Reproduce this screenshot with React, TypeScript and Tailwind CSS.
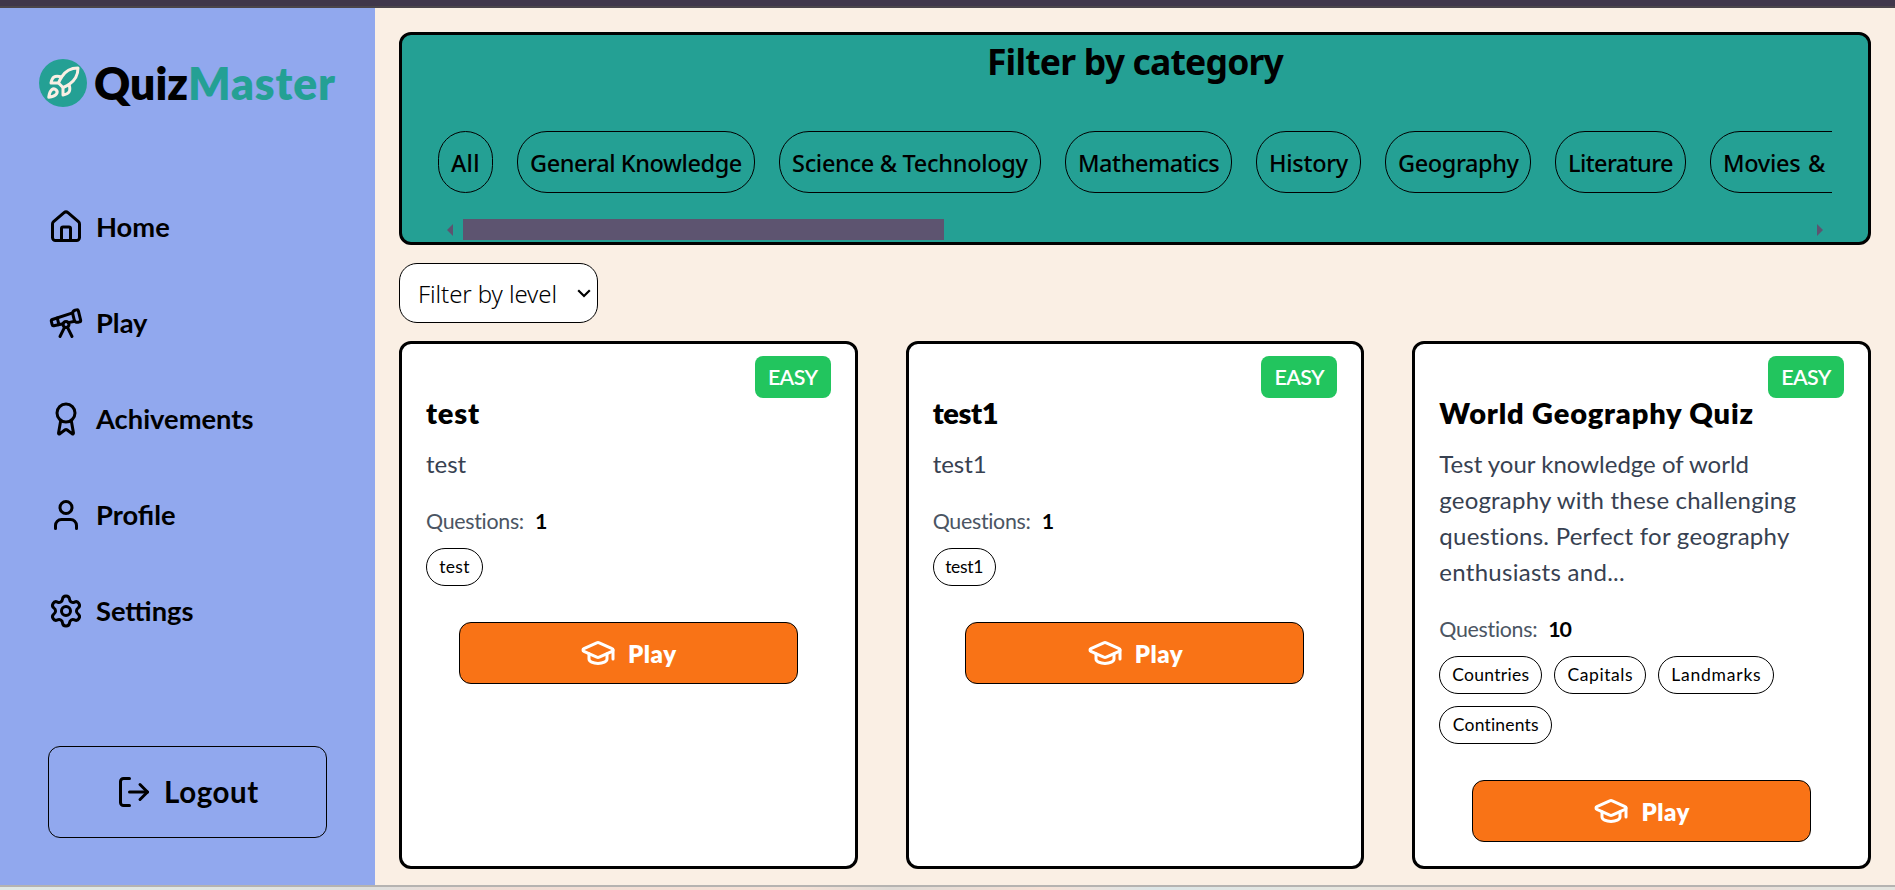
import type { ReactNode } from "react";
import { Award, GraduationCap, House, LogOut, Rocket, Settings, Telescope, User } from "lucide-react";

const navItems = [
  { label: "Home", icon: House },
  { label: "Play", icon: Telescope },
  { label: "Achivements", icon: Award },
  { label: "Profile", icon: User },
  { label: "Settings", icon: Settings },
];

const categories = [
  { label: "All", cls: "w-[55px] tracking-[0.2px]" },
  { label: "General Knowledge", cls: "w-[238px] tracking-[-0.42px]" },
  { label: "Science & Technology", cls: "w-[262px] tracking-[-0.3px]" },
  { label: "Mathematics", cls: "w-[167px] tracking-[-0.46px]" },
  { label: "History", cls: "w-[105px] tracking-[-0.3px]" },
  { label: "Geography", cls: "w-[146px] tracking-[-0.4px]" },
  { label: "Literature", cls: "w-[131px] tracking-[-0.6px]" },
  { label: "Movies & TV", cls: "w-[170px] tracking-[-0.3px] [word-spacing:2px]" },
];

type Tag = { label: string; cls: string };

type Quiz = {
  title: string;
  titleCls: string;
  description: ReactNode;
  questions: number;
  tags: Tag[];
};

const quizzes: Quiz[] = [
  {
    title: "test",
    titleCls: "tracking-[0.8px]",
    description: "test",
    questions: 1,
    tags: [{ label: "test", cls: "w-[57px] tracking-[0.35px]" }],
  },
  {
    title: "test1",
    titleCls: "tracking-[-0.4px]",
    description: "test1",
    questions: 1,
    tags: [{ label: "test1", cls: "w-[63px] tracking-[-0.3px]" }],
  },
  {
    title: "World Geography Quiz",
    titleCls: "tracking-[0.83px]",
    description: (
      <>
        <span className="block">Test your knowledge of world</span>
        <span className="block tracking-[0.2px]">geography with these challenging</span>
        <span className="block tracking-[0.26px]">questions. Perfect for geography</span>
        <span className="block tracking-[0.28px]">enthusiasts and...</span>
      </>
    ),
    questions: 10,
    tags: [
      { label: "Countries", cls: "w-[103px] tracking-[0.3px]" },
      { label: "Capitals", cls: "w-[92px] tracking-[0.6px]" },
      { label: "Landmarks", cls: "w-[116px] tracking-[0.8px]" },
      { label: "Continents", cls: "w-[113px] tracking-[0.2px]" },
    ],
  },
];

function Sidebar() {
  return (
    <aside className="flex w-[375px] shrink-0 flex-col bg-[#91a8ee] pt-[51px] pb-[47px]">
      <div className="flex h-12 items-center gap-[7px] pl-[39px]">
        <div className="flex size-12 items-center justify-center rounded-full bg-[#24a094]">
          <Rocket size={36} className="text-[#faefe4]" />
        </div>
        <div className="flex h-12 items-center pb-px text-[44.5px] leading-[47px] font-extrabold text-black">
          <span className="w-[94px]">Quiz</span>
          <span className="tracking-[0.8px] text-[#24a094]">Master</span>
        </div>
      </div>
      <nav className="mt-[102px] flex flex-col gap-[60px] pl-12">
        {navItems.map(({ label, icon: Icon }) => (
          <a key={label} className="flex h-9 items-center gap-3 text-[27.3px] leading-9 font-bold text-black">
            <Icon size={36} />
            {label}
          </a>
        ))}
      </nav>
      <button className="mx-12 mt-auto flex h-[92px] items-center justify-center gap-3 rounded-xl border border-black text-[29.5px] font-bold tracking-[0.6px] text-black">
        <LogOut size={36} />
        <span className="pt-px">Logout</span>
      </button>
    </aside>
  );
}

function CategoryFilter() {
  return (
    <section className="flex h-[213px] flex-col rounded-xl border-[3px] border-black bg-[#24a094] px-9 font-['Noto_Sans',sans-serif] text-black">
      <h2 className="h-[50px] pt-px text-center text-[35.5px] leading-[50px] font-bold tracking-[-0.8px]">
        Filter by category
      </h2>
      <div className="mt-[46px] flex gap-6 overflow-hidden">
        {categories.map((c) => (
          <button
            key={c.label}
            className={`h-[62px] shrink-0 rounded-[30px] border border-black pt-[3px] pl-3 text-left text-[23.5px] font-medium whitespace-nowrap ${c.cls}`}
          >
            {c.label}
          </button>
        ))}
      </div>
      <div className="mt-[26px] flex h-[21px] items-center pr-[9px] pl-[9px]">
        <svg width="6" height="12" viewBox="0 0 6 12" fill="#5d5470">
          <path d="M6 0v12L0 6z" />
        </svg>
        <div className="ml-[10px] h-full w-[481px] bg-[#5d5470]" />
        <svg className="ml-auto" width="6" height="12" viewBox="0 0 6 12" fill="#5d5470">
          <path d="M0 0v12l6-6z" />
        </svg>
      </div>
    </section>
  );
}

function LevelSelect() {
  return (
    <button className="mt-[18px] flex h-[60px] w-[199px] items-center justify-between rounded-[18px] border border-black bg-white pr-[6px] pl-[18px] font-['Noto_Sans',sans-serif] text-[24px] font-light tracking-[-0.09px] text-black">
      <span className="pt-[2px]">Filter by level</span>
      <svg width="14" height="9" viewBox="0 0 14 9" fill="none" stroke="black" strokeWidth="2.2">
        <path d="M1.2 1.2 7 7l5.8-5.8" />
      </svg>
    </button>
  );
}

function QuizCard({ quiz }: { quiz: Quiz }) {
  return (
    <article className="relative flex h-[528px] flex-col rounded-xl border-[3px] border-black bg-white px-6 pt-[51px]">
      <span className="absolute top-3 right-6 flex h-[42px] w-[76px] items-center justify-center rounded-lg bg-[#22c55e] pt-px text-[21.4px] font-semibold tracking-[-0.6px] text-white">
        EASY
      </span>
      <h3 className={`text-[29px] leading-9 font-extrabold text-black ${quiz.titleCls}`}>{quiz.title}</h3>
      <p className="mt-[15px] text-[24px] leading-9 text-[#374151]">{quiz.description}</p>
      <div className="mt-[22px] flex h-8 items-center pt-[2px] text-[21.4px] leading-8">
        <span className="w-[109px] tracking-[-0.3px] text-[#4b5563]">Questions:</span>
        <span className="font-bold tracking-[-1.2px] text-black">{quiz.questions}</span>
      </div>
      <div className="mt-3 flex flex-wrap gap-3">
        {quiz.tags.map((t) => (
          <span
            key={t.label}
            className={`flex h-[38px] items-center justify-center rounded-full border border-black text-[17.5px] text-black ${t.cls}`}
          >
            {t.label}
          </span>
        ))}
      </div>
      <button className="mt-9 flex h-[62px] w-[339px] items-center justify-center gap-3 self-center rounded-xl border border-black bg-[#f97316] text-[24px] font-extrabold tracking-[0.5px] text-white">
        <GraduationCap size={36} />
        <span className="pt-px">Play</span>
      </button>
    </article>
  );
}

export default function App() {
  return (
    <div className="flex h-[890px] w-[1895px] flex-col overflow-hidden bg-[#faefe4] font-[Lato,sans-serif]">
      <div className="h-2 shrink-0 border-b-2 border-[#4b454b] bg-[#40374b]" />
      <div className="flex h-[877px] shrink-0">
        <Sidebar />
        <main className="flex min-w-0 flex-1 flex-col px-6 pt-6">
          <CategoryFilter />
          <LevelSelect />
          <div className="mt-[18px] grid grid-cols-3 gap-12">
            {quizzes.map((q) => (
              <QuizCard key={q.title} quiz={q} />
            ))}
          </div>
        </main>
      </div>
      <div className="h-[2px] shrink-0 bg-[#b5b3b1]" />
      <div className="h-[3px] shrink-0 bg-[linear-gradient(90deg,#e0e9e6_0%,#e0e7e4_10%,#dfdfdd_20%,#efdbd3_25%,#f6e1d6_42%,#dedad5_47%,#f6e0d5_55%,#dbe5e6_61%,#e6e6df_71%,#f0dbd3_80%,#efdbd3_90%,#e3e4df_96%)]" />
    </div>
  );
}
